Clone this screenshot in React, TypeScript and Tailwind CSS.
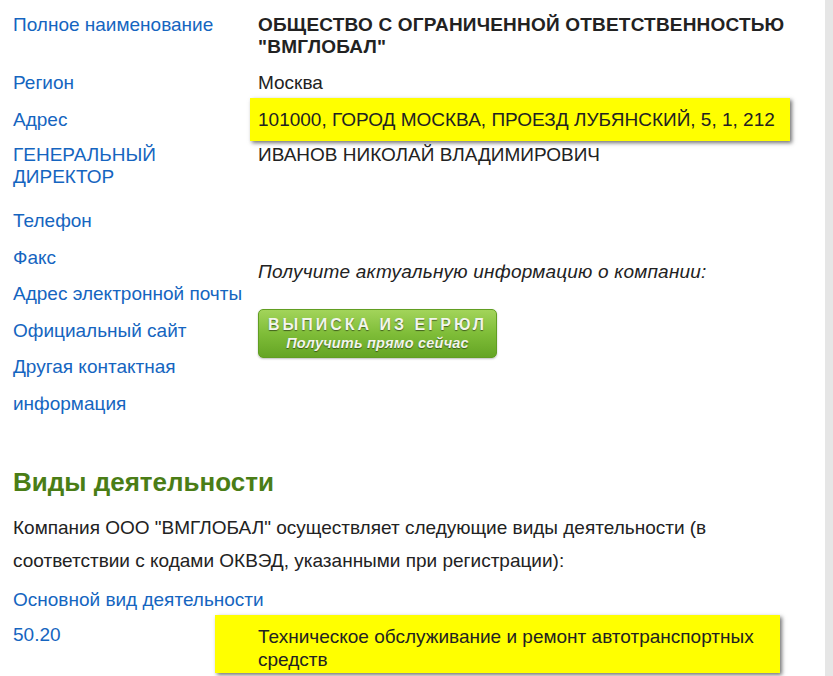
import React from "react";

const blue = "text-[#1565c0]";

export default function App() {
  return (
    <div className="flex w-[833px] h-[676px] overflow-hidden bg-white text-[19px] text-[#222]" style={{ fontFamily: '"Liberation Sans", Arial, sans-serif' }}>
      <div className="w-[825px] flex-none pl-[13px]">
        {/* Row 1 */}
        <div className="flex pt-[14px] leading-[22px]">
          <div className={`w-[245px] flex-none ${blue}`}>Полное наименование</div>
          <div className="font-bold tracking-[0.2px]">ОБЩЕСТВО С ОГРАНИЧЕННОЙ ОТВЕТСТВЕННОСТЬЮ<br />"ВМГЛОБАЛ"</div>
        </div>
        {/* Row 2 */}
        <div className="flex mt-[14px] leading-[22px]">
          <div className={`w-[245px] flex-none ${blue}`}>Регион</div>
          <div>Москва</div>
        </div>
        {/* Row 3 */}
        <div className="flex items-center mt-[4px] h-[43px] leading-[22px]">
          <div className={`w-[237px] flex-none ${blue}`}>Адрес</div>
          <div className="w-[540px] h-[43px] flex items-center pl-[8px] bg-[#ffff00] shadow-[2px_2px_4px_rgba(0,0,0,0.55)]">101000, ГОРОД МОСКВА, ПРОЕЗД ЛУБЯНСКИЙ, 5, 1, 212</div>
        </div>
        {/* Row 4 */}
        <div className="flex mt-[3px] leading-[22px]">
          <div className={`w-[245px] flex-none ${blue}`}>ГЕНЕРАЛЬНЫЙ<br />ДИРЕКТОР</div>
          <div>ИВАНОВ НИКОЛАЙ ВЛАДИМИРОВИЧ</div>
        </div>
        {/* Contacts */}
        <div className="flex mt-[15px]">
          <div className={`w-[245px] flex-none leading-[36.6px] ${blue}`}>
            <div>Телефон</div>
            <div>Факс</div>
            <div>Адрес электронной почты</div>
            <div>Официальный сайт</div>
            <div>Другая контактная</div>
            <div>информация</div>
          </div>
          <div className="pt-[58px]">
            <div className="italic leading-[22px] tracking-[0.2px]">Получите актуальную информацию о компании:</div>
            <div className="mt-[26px] w-[239px] h-[49px] rounded-[5px] border border-[#619e22] bg-gradient-to-b from-[#a2d45a] via-[#7fbd38] to-[#65a524] flex flex-col items-center justify-center shadow-[0_1px_2px_rgba(0,0,0,0.25)]">
              <div className="text-[16px] leading-[19px] font-bold tracking-[3px] text-[#f2f5ec] [text-shadow:0_1px_1px_rgba(0,0,0,0.5)]">ВЫПИСКА ИЗ ЕГРЮЛ</div>
              <div className="text-[14.5px] leading-[18px] font-bold italic tracking-[0.2px] text-[#f2f5ec] [text-shadow:0_1px_1px_rgba(0,0,0,0.5)]">Получить прямо сейчас</div>
            </div>
          </div>
        </div>
        {/* Activities */}
        <h2 className="mt-[43px] text-[26px] leading-[32px] font-bold text-[#4a7d16]">Виды деятельности</h2>
        <p className="mt-[13px] leading-[33px] w-[780px]">Компания ООО "ВМГЛОБАЛ" осуществляет следующие виды деятельности (в соответствии с кодами ОКВЭД, указанными при регистрации):</p>
        <div className={`mt-[12px] leading-[22px] ${blue}`}>Основной вид деятельности</div>
        <div className="flex mt-[4px]">
          <div className={`w-[202px] flex-none pt-[9px] leading-[22px] ${blue}`}>50.20</div>
          <div className="w-[565px] h-[58px] pl-[43px] pt-[10px] leading-[23px] bg-[#ffff00] shadow-[2px_2px_4px_rgba(0,0,0,0.55)]">Техническое обслуживание и ремонт автотранспортных<br />средств</div>
        </div>
      </div>
      <div className="flex-1 bg-[#e6e6e6]" />
    </div>
  );
}
